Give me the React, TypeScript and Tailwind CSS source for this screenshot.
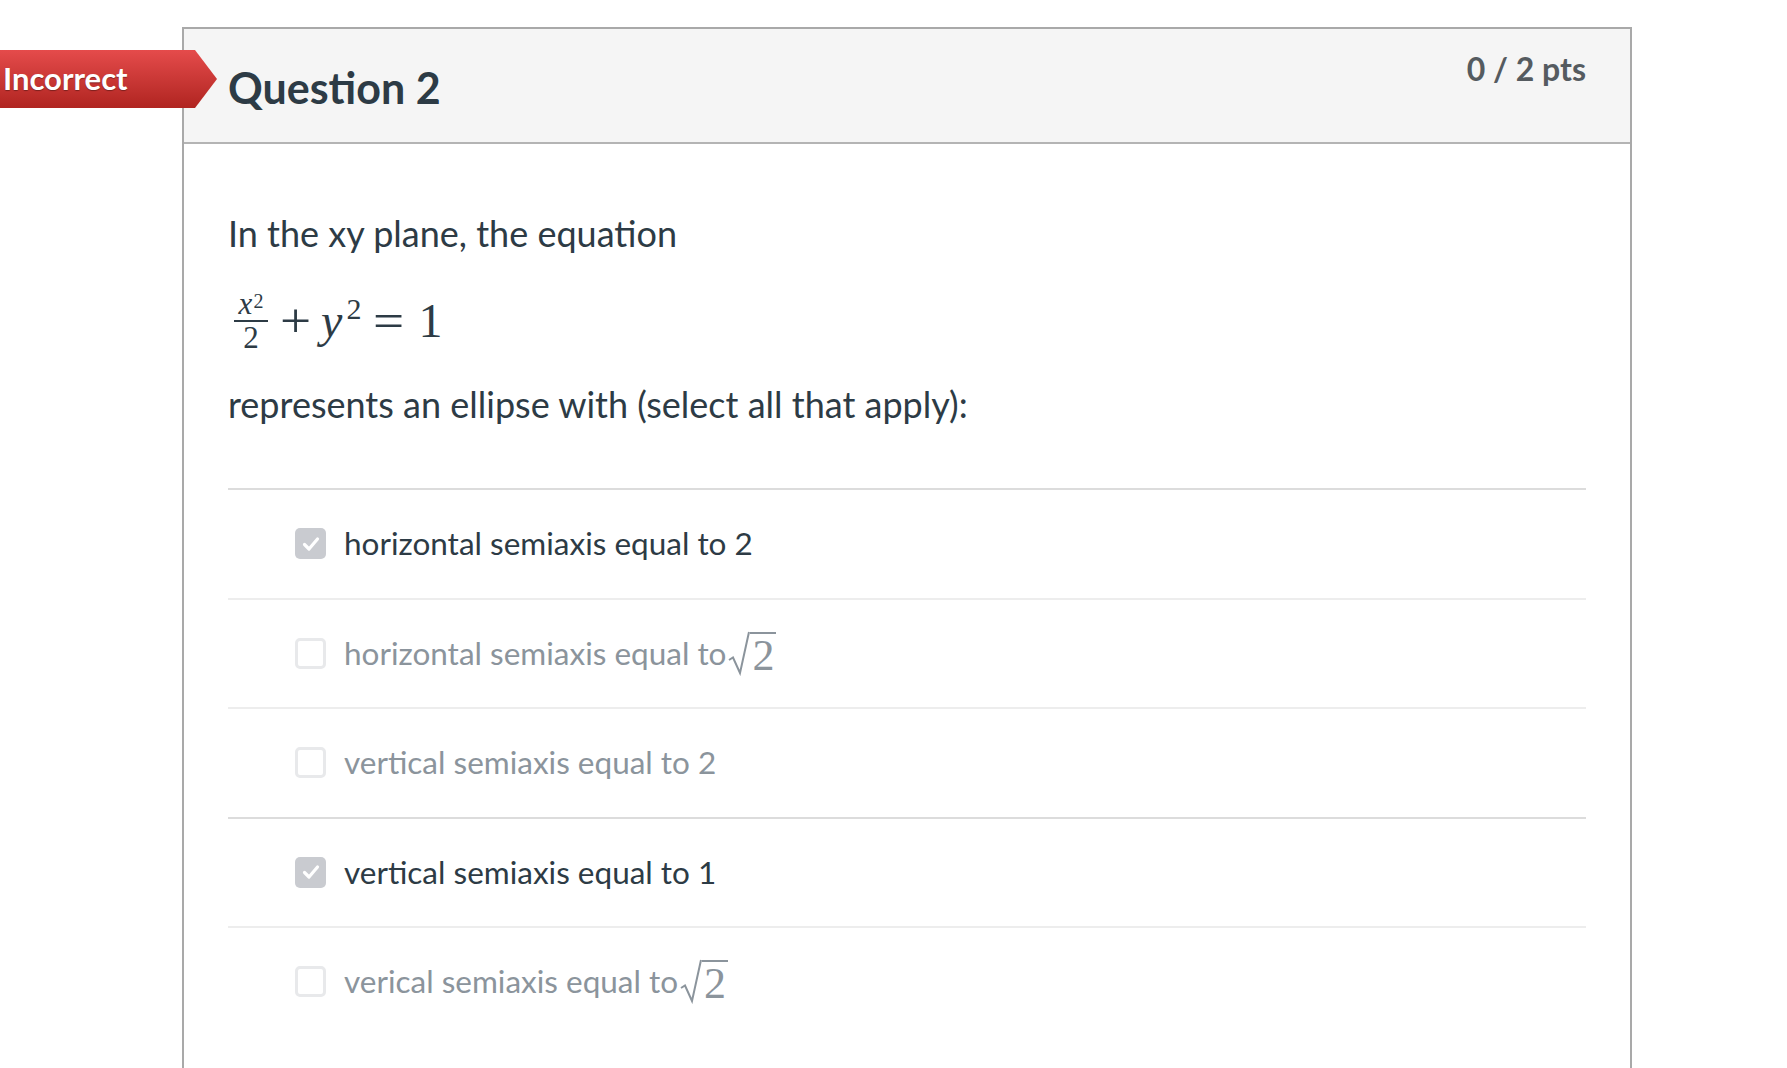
import React from "react";

const font = { fontFamily: "Lato, 'Liberation Sans', sans-serif" };

// Radical sign followed by an overlined serif 2
const Sqrt2 = () => (
  <span className="inline-flex items-start ml-[2px]">
    <svg width="22" height="45" viewBox="0 0 22 45" className="mt-[0px]">
      <path
        d="M1 29 L5 26.5 L12 42 L21 1"
        fill="none"
        stroke="currentColor"
        strokeWidth="2"
        strokeLinejoin="miter"
      />
    </svg>
    <span className="font-['Liberation_Serif',serif] text-[44px] leading-[41px] border-t-2 border-current pt-[1px] px-[2px] mt-[1px]">
      2
    </span>
  </span>
);

const CheckBox = ({ checked }: { checked: boolean }) =>
  checked ? (
    <span className="w-[31px] h-[31px] rounded-[5px] bg-[#c9cbd0] flex items-center justify-center shrink-0">
      <svg width="20" height="20" viewBox="0 0 20 20">
        <path d="M3.5 10.5 L8 15 L16.5 5" fill="none" stroke="#fff" strokeWidth="3.2" strokeLinecap="round" strokeLinejoin="round" />
      </svg>
    </span>
  ) : (
    <span className="w-[31px] h-[31px] rounded-[5px] border-[3px] border-[#e8e9eb] bg-white shrink-0" />
  );

const answers = [
  { text: "horizontal semiaxis equal to 2", sqrt: false, checked: true, dark: true },
  { text: "horizontal semiaxis equal to", sqrt: true, checked: false, dark: false },
  { text: "vertical semiaxis equal to 2", sqrt: false, checked: false, dark: false },
  { text: "vertical semiaxis equal to 1", sqrt: false, checked: true, dark: true },
  { text: "verical semiaxis equal to", sqrt: true, checked: false, dark: false },
];

export default function App() {
  return (
    <div className="min-h-screen bg-white relative" style={font}>
      {/* Incorrect ribbon */}
      <div
        className="absolute left-0 top-[50px] w-[217px] h-[58px] z-10 bg-gradient-to-b from-[#e54b4b] to-[#b02420] flex items-center pl-[3px]"
        style={{ clipPath: "polygon(0 0, 195px 0, 217px 50%, 195px 100%, 0 100%)" }}
      >
        <span className="text-white font-bold text-[31px] leading-none [text-shadow:0_1px_1px_rgba(0,0,0,0.35)] -mt-[2px]">
          Incorrect
        </span>
      </div>

      <div className="pt-[27px] pl-[182px] pr-[155px]">
        <div className="border-2 border-[#a9a9a9] w-[1450px] pb-[60px]">
          {/* Header */}
          <div className="bg-[#f5f5f5] border-b-2 border-[#b4b4b4] h-[115px] px-[44px] flex justify-between items-start">
            <h2 className="pt-[34px] text-[43px] leading-[50px] font-bold text-[#2d3b45]">Question 2</h2>
            <div className="pt-[22px] text-[32px] leading-[36px] font-bold text-[#555b60]">0 / 2 pts</div>
          </div>

          {/* Body */}
          <div className="px-[44px] pt-[62px] text-[#2d3b45]">
            <p className="text-[36px] leading-[54px]">In the xy plane, the equation</p>

            <div className="mt-[30px] h-[62px] flex items-center font-['Liberation_Serif',serif] text-[48px] text-[#2d3b45] pl-[6px]">
              <span className="inline-flex flex-col items-center mr-[14px]">
                <span className="text-[31px] leading-[28px] italic">
                  x<sup className="not-italic text-[20px] relative -top-[6px] ml-[1px]">2</sup>
                </span>
                <span className="w-[34px] h-[2px] bg-[#2d3b45] my-[2px]" />
                <span className="text-[31px] leading-[28px]">2</span>
              </span>
              <span className="mr-[12px] scale-x-[1.15]">+</span>
              <span className="italic">y</span>
              <sup className="text-[30px] relative -top-[12px] ml-[4px] mr-[14px]">2</sup>
              <span className="mr-[16px] scale-x-[1.15]">=</span>
              <span>1</span>
            </div>

            <p className="mt-[25px] text-[36px] leading-[54px]">represents an ellipse with (select all that apply):</p>

            <div className="mt-[57px]">
              {answers.map((a, i) => (
                <div
                  key={i}
                  className={`h-[109.5px] border-t-2 flex items-center pl-[67px] gap-[18px] ${a.dark ? "border-[#dcdcdc]" : "border-[#ededed]"}`}
                >
                  <CheckBox checked={a.checked} />
                  <span className={`flex items-center text-[31.5px] ${a.dark ? "text-[#2d3b45]" : "text-[#8b949c]"}`}>
                    {a.text}
                    {a.sqrt && <Sqrt2 />}
                  </span>
                </div>
              ))}
            </div>
          </div>
        </div>
      </div>
    </div>
  );
}
